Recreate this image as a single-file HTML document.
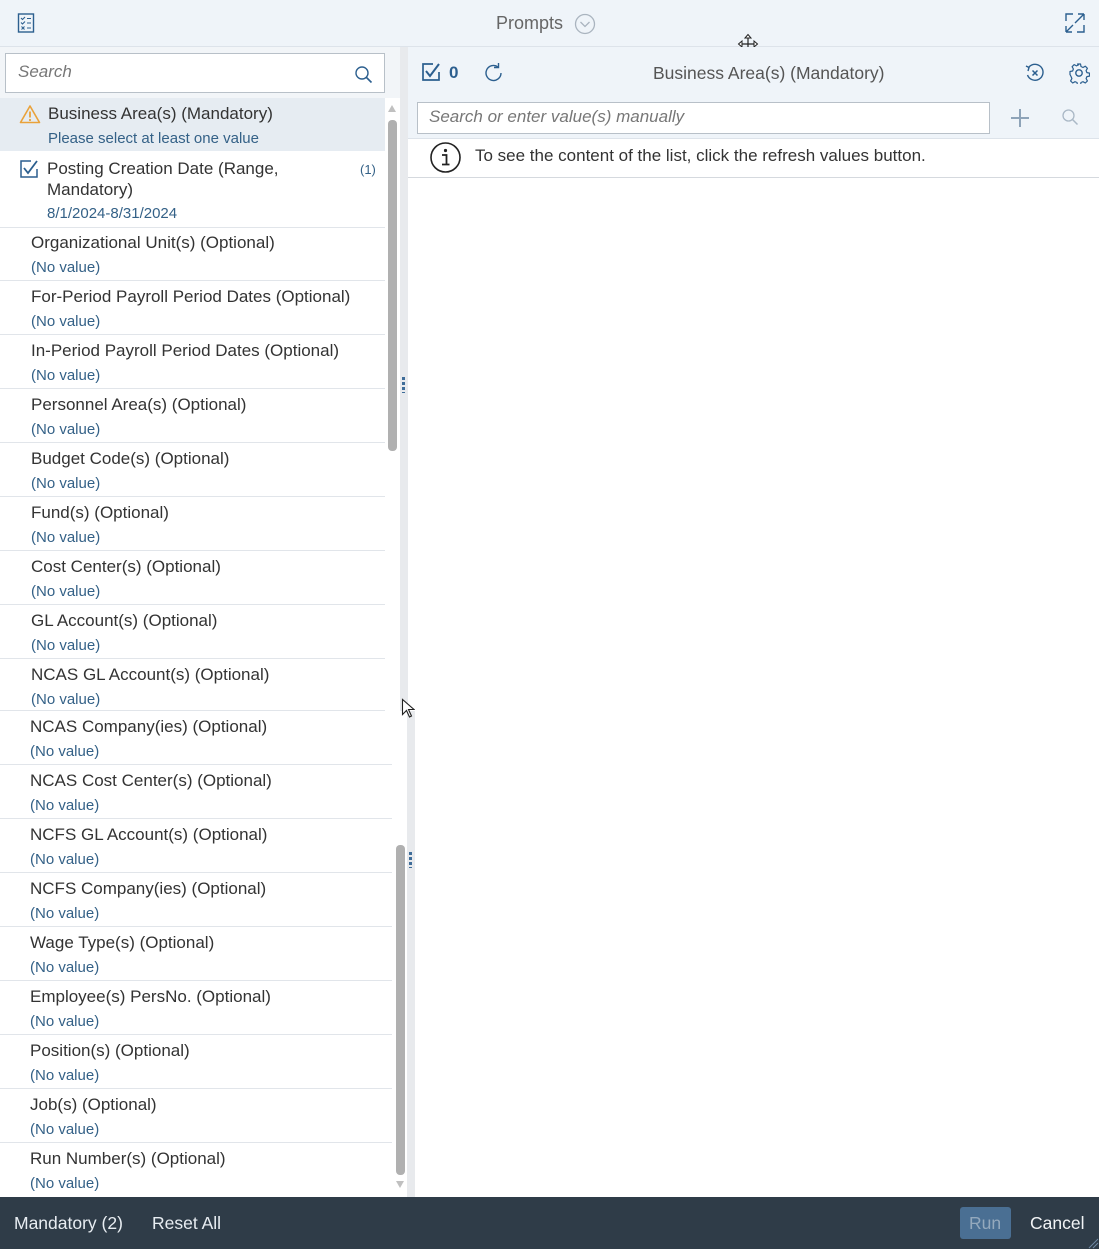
<!DOCTYPE html>
<html><head><meta charset="utf-8"><style>
*{box-sizing:border-box;margin:0;padding:0}
body{width:1099px;height:1249px;position:relative;overflow:hidden;background:#fff;font-family:"Liberation Sans",sans-serif;color:#333}
.abs{position:absolute}
.row{position:absolute;left:0;height:54px;border-bottom:1px solid #e1e5ea}
.t{position:absolute;left:31px;top:6px;font-size:17px;color:#333;white-space:nowrap}
.v{position:absolute;left:31px;top:32px;font-size:15px;color:#346187;white-space:nowrap}
</style></head><body>
<div class="abs" style="left:0;top:0;width:1099px;height:47px;background:#eff4f9;border-bottom:1px solid #dde3ea"></div>
<svg class="abs" style="left:17px;top:13px" width="18" height="20" viewBox="0 0 18 20"><rect x="1.5" y="1" width="15" height="18" fill="none" stroke="#2c5f8f" stroke-width="1.4"/><path d="M4 5l1.5 1.5L8 4M10 5.5h4M4 9.5l1.5 1.5L8 8.5M10 10h4M4.5 13.5l3 3M7.5 13.5l-3 3M10 15h4" stroke="#2c5f8f" stroke-width="1.1" fill="none"/></svg>
<div class="abs" style="left:496px;top:13px;font-size:18px;color:#666">Prompts</div>
<svg class="abs" style="left:574px;top:13px" width="22" height="22"><circle cx="11" cy="11" r="9.5" fill="none" stroke="#aab4bf" stroke-width="1.3"/><path d="M6.5 9l4.5 4.5 4.5-4.5" fill="none" stroke="#aab4bf" stroke-width="1.3"/></svg>
<svg class="abs" style="left:1064px;top:12px" width="22" height="22"><path d="M2 9V2h7M13 20h7v-7M20 2l-9 9M20 2v6M20 2h-6M2 20l7-7M2 20v-6M2 20h6" fill="none" stroke="#2c5f8f" stroke-width="1.4"/></svg>
<svg class="abs" style="left:737px;top:33px" width="22" height="22"><path d="M11 2v18M2 11h18" stroke="#222" stroke-width="1.2"/><path d="M8 5l3-3.5 3 3.5zM8 17l3 3.5 3-3.5zM5 8l-3.5 3 3.5 3zM17 8l3.5 3-3.5 3z" fill="#fff" stroke="#222" stroke-width="1"/></svg>

<div class="abs" style="left:0;top:47px;width:400px;height:51px;background:#f2f5f8"></div>
<div class="abs" style="left:5px;top:53px;width:380px;height:40px;border:1px solid #b8c0c8;background:#fff"></div>
<div class="abs" style="left:18px;top:62px;font-size:17px;font-style:italic;color:#777">Search</div>
<svg class="abs" style="left:354px;top:65px" width="20" height="20"><circle cx="8" cy="8" r="6" fill="none" stroke="#2c5f8f" stroke-width="1.4"/><path d="M12.5 12.5l5 5" stroke="#2c5f8f" stroke-width="1.6"/></svg>

<div class="abs" style="left:0;top:98px;width:385px;height:53px;background:#e6ecf2"></div>
<svg class="abs" style="left:19px;top:104px" width="22" height="20"><path d="M11 2L1.5 18.5h19z" fill="none" stroke="#e9a23b" stroke-width="1.6" stroke-linejoin="round"/><path d="M11 7.5v6" stroke="#e9a23b" stroke-width="1.8"/><circle cx="11" cy="16" r="1.1" fill="#e9a23b"/></svg>
<div class="abs" style="left:48px;top:104px;font-size:17px">Business Area(s) (Mandatory)</div>
<div class="abs" style="left:48px;top:130px;font-size:15px;color:#346187">Please select at least one value</div>
<div class="row" style="top:151px;height:77px;width:385px"></div>
<svg class="abs" style="left:19px;top:159px" width="20" height="20"><path d="M12 2H2v16h16v-8" fill="none" stroke="#2c5f8f" stroke-width="1.5"/><path d="M5 9l4 5 9-12" fill="none" stroke="#2c5f8f" stroke-width="1.8"/></svg>
<div class="abs" style="left:47px;top:158px;font-size:17px;line-height:21px">Posting Creation Date (Range,<br>Mandatory)</div>
<div class="abs" style="left:360px;top:162px;font-size:13px;color:#346187">(1)</div>
<div class="abs" style="left:47px;top:205px;font-size:15px;color:#346187">8/1/2024-8/31/2024</div>

<div class="row" style="top:227px;width:385px"><div class="t">Organizational Unit(s) (Optional)</div><div class="v">(No value)</div></div>
<div class="row" style="top:281px;width:385px"><div class="t">For-Period Payroll Period Dates (Optional)</div><div class="v">(No value)</div></div>
<div class="row" style="top:335px;width:385px"><div class="t">In-Period Payroll Period Dates (Optional)</div><div class="v">(No value)</div></div>
<div class="row" style="top:389px;width:385px"><div class="t">Personnel Area(s) (Optional)</div><div class="v">(No value)</div></div>
<div class="row" style="top:443px;width:385px"><div class="t">Budget Code(s) (Optional)</div><div class="v">(No value)</div></div>
<div class="row" style="top:497px;width:385px"><div class="t">Fund(s) (Optional)</div><div class="v">(No value)</div></div>
<div class="row" style="top:551px;width:385px"><div class="t">Cost Center(s) (Optional)</div><div class="v">(No value)</div></div>
<div class="row" style="top:605px;width:385px"><div class="t">GL Account(s) (Optional)</div><div class="v">(No value)</div></div>
<div class="row" style="top:659px;width:385px;height:52px"><div class="t">NCAS GL Account(s) (Optional)</div><div class="v">(No value)</div></div>

<div class="row" style="top:711px;width:392px"><div class="t" style="left:30px">NCAS Company(ies) (Optional)</div><div class="v" style="left:30px">(No value)</div></div>
<div class="row" style="top:765px;width:392px"><div class="t" style="left:30px">NCAS Cost Center(s) (Optional)</div><div class="v" style="left:30px">(No value)</div></div>
<div class="row" style="top:819px;width:392px"><div class="t" style="left:30px">NCFS GL Account(s) (Optional)</div><div class="v" style="left:30px">(No value)</div></div>
<div class="row" style="top:873px;width:392px"><div class="t" style="left:30px">NCFS Company(ies) (Optional)</div><div class="v" style="left:30px">(No value)</div></div>
<div class="row" style="top:927px;width:392px"><div class="t" style="left:30px">Wage Type(s) (Optional)</div><div class="v" style="left:30px">(No value)</div></div>
<div class="row" style="top:981px;width:392px"><div class="t" style="left:30px">Employee(s) PersNo. (Optional)</div><div class="v" style="left:30px">(No value)</div></div>
<div class="row" style="top:1035px;width:392px"><div class="t" style="left:30px">Position(s) (Optional)</div><div class="v" style="left:30px">(No value)</div></div>
<div class="row" style="top:1089px;width:392px"><div class="t" style="left:30px">Job(s) (Optional)</div><div class="v" style="left:30px">(No value)</div></div>
<div class="row" style="top:1143px;width:392px;border:0"><div class="t" style="left:30px">Run Number(s) (Optional)</div><div class="v" style="left:30px">(No value)</div></div>

<div class="abs" style="left:388px;top:120px;width:9px;height:331px;background:#b0b0b0;border-radius:4px"></div>
<div class="abs" style="left:388px;top:105px;width:0;height:0;border-left:4.5px solid transparent;border-right:4.5px solid transparent;border-bottom:7px solid #c0c0c0"></div>
<div class="abs" style="left:400px;top:47px;width:8px;height:664px;background:#e8eaed"></div>
<div class="abs" style="left:402px;top:377px;width:3px;height:16px;background:repeating-linear-gradient(#3f6d99 0 3px,transparent 3px 5px)"></div>
<div class="abs" style="left:396px;top:845px;width:9px;height:330px;background:#b0b0b0;border-radius:4px"></div>
<div class="abs" style="left:396px;top:1181px;width:0;height:0;border-left:4.5px solid transparent;border-right:4.5px solid transparent;border-top:7px solid #c0c0c0"></div>
<div class="abs" style="left:407px;top:711px;width:8px;height:486px;background:#e8eaed"></div>
<div class="abs" style="left:409px;top:852px;width:3px;height:16px;background:repeating-linear-gradient(#3f6d99 0 3px,transparent 3px 5px)"></div>
<svg class="abs" style="left:401px;top:698px" width="14" height="22"><path d="M1.5 1.5v15l4-4 3 6.5 2-1-3-6.5h5.5z" fill="#fff" stroke="#222" stroke-width="1.1"/></svg>

<div class="abs" style="left:408px;top:47px;width:691px;height:92px;background:#eff4f9;border-bottom:1px solid #dde3ea"></div>
<svg class="abs" style="left:421px;top:62px" width="22" height="20"><path d="M12 2H2v16h16v-8" fill="none" stroke="#2c5f8f" stroke-width="1.7"/><path d="M5 9l4 5 9-12" fill="none" stroke="#2c5f8f" stroke-width="2"/></svg>
<div class="abs" style="left:449px;top:63px;font-size:17px;font-weight:bold;color:#2c5f8f">0</div>
<svg class="abs" style="left:483px;top:62px" width="22" height="22"><path d="M18 11a7.5 7.5 0 1 1-3-6" fill="none" stroke="#2c5f8f" stroke-width="1.4"/><path d="M15.5 1v4.5H11" fill="none" stroke="#2c5f8f" stroke-width="1.4"/></svg>
<div class="abs" style="left:653px;top:63px;font-size:17.5px;color:#555">Business Area(s) (Mandatory)</div>
<svg class="abs" style="left:1024px;top:62px" width="22" height="22"><path d="M5 5a8 8 0 1 1-1.5 8" fill="none" stroke="#2c5f8f" stroke-width="1.4"/><path d="M2 4l3 1.5L4 9" fill="none" stroke="#2c5f8f" stroke-width="1.4"/><path d="M8.5 8.5l5 5M13.5 8.5l-5 5" stroke="#2c5f8f" stroke-width="1.5"/></svg>
<svg class="abs" style="left:1068px;top:62px" width="22" height="22"><circle cx="11" cy="11" r="3.2" fill="none" stroke="#2c5f8f" stroke-width="1.4"/><path d="M9.5 2h3l.5 2.5 2 1 2.3-1.3 2.1 2.1-1.3 2.3.8 2 2.6.5v3l-2.6.5-.8 2 1.3 2.3-2.1 2.1-2.3-1.3-2 .8-.5 2.6h-3l-.5-2.6-2-.8-2.3 1.3-2.1-2.1 1.3-2.3-.8-2L2 12.5v-3l2.6-.5.8-2L4.1 4.7l2.1-2.1 2.3 1.3 2-1z" fill="none" stroke="#2c5f8f" stroke-width="1.2" stroke-linejoin="round"/></svg>
<div class="abs" style="left:417px;top:102px;width:573px;height:32px;border:1px solid #b8c0c8;background:#fff"></div>
<div class="abs" style="left:429px;top:107px;font-size:17px;font-style:italic;color:#777">Search or enter value(s) manually</div>
<svg class="abs" style="left:1010px;top:108px" width="20" height="20"><path d="M10 1v18M1 10h18" stroke="#8ea3b8" stroke-width="2"/></svg>
<svg class="abs" style="left:1061px;top:108px" width="20" height="20"><circle cx="7.5" cy="7.5" r="5.5" fill="none" stroke="#aab8c6" stroke-width="1.3"/><path d="M11.5 11.5l5 5" stroke="#aab8c6" stroke-width="1.5"/></svg>
<div class="abs" style="left:408px;top:139px;width:691px;height:39px;border-bottom:1px solid #d5d9de"></div>
<svg class="abs" style="left:429px;top:141px" width="33" height="33"><circle cx="16.5" cy="16.5" r="14.5" fill="none" stroke="#222" stroke-width="1.6"/><circle cx="16.5" cy="9.5" r="1.6" fill="#222"/><path d="M13 14h4.5v9M13 23.5h7.5" fill="none" stroke="#222" stroke-width="1.8"/></svg>
<div class="abs" style="left:475px;top:146px;font-size:17px;color:#333">To see the content of the list, click the refresh values button.</div>

<div class="abs" style="left:0;top:1197px;width:1099px;height:52px;background:#2f3c48"></div>
<div class="abs" style="left:14px;top:1213px;font-size:17.5px;color:#e8edf2">Mandatory (2)</div>
<div class="abs" style="left:152px;top:1213px;font-size:17.5px;color:#e8edf2">Reset All</div>
<div class="abs" style="left:960px;top:1207px;width:51px;height:32px;background:#4a6f93;border-radius:3px"></div>
<div class="abs" style="left:969px;top:1213px;font-size:17.5px;color:#94a9bd">Run</div>
<div class="abs" style="left:1030px;top:1213px;font-size:17.5px;color:#f2f4f6">Cancel</div>
<svg class="abs" style="left:1087px;top:1237px" width="12" height="12"><path d="M11 2L2 11M11 6l-5 5" stroke="#6f8aa5" stroke-width="1"/></svg>
</body></html>
